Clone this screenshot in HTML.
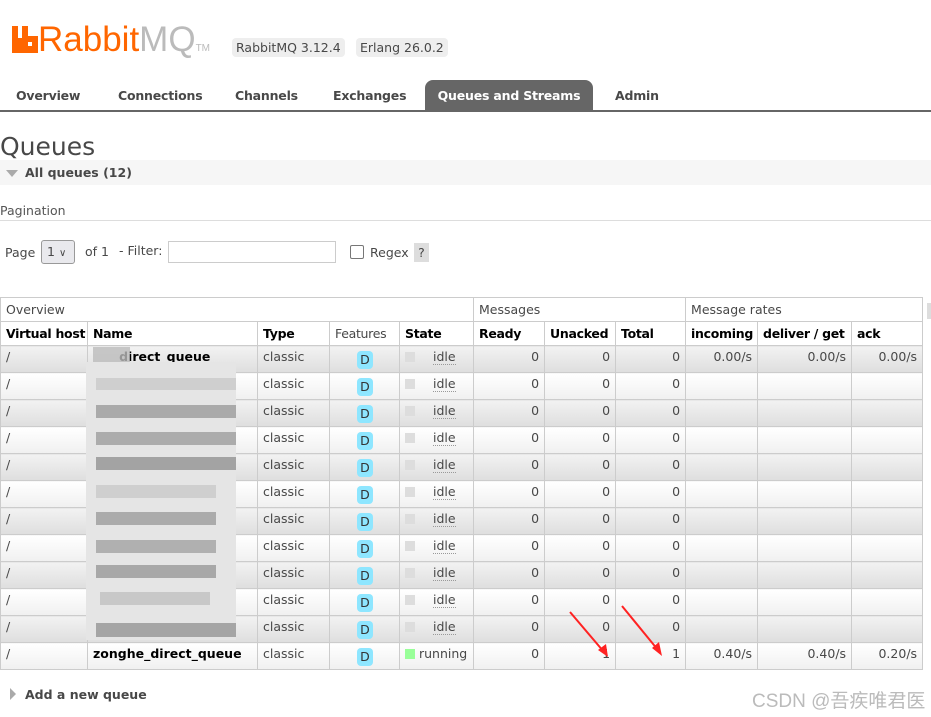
<!DOCTYPE html>
<html><head><meta charset="utf-8"><style>
*{margin:0;padding:0;box-sizing:border-box}
body{width:931px;height:717px;background:#fff;font-family:"DejaVu Sans","Liberation Sans",sans-serif;font-size:12.5px;color:#484848;position:relative;overflow:hidden}
.abs{position:absolute}
.logo{left:12px;top:22px;font-family:"Liberation Sans",sans-serif;font-size:35px;line-height:36px;color:#f60;letter-spacing:0}
.logo .mq{color:#bbb}
.logo .tm{font-size:10px;color:#bbb;letter-spacing:0}
.badge{top:38px;background:#eee;border-radius:4px;padding:2px 4px;font-size:12.5px;color:#484848}
.nav{top:80px;left:0;width:931px;height:32px;border-bottom:2px solid #666}
.nav span{position:absolute;top:8px;font-weight:bold;font-size:12.5px;color:#484848;letter-spacing:-0.2px;white-space:nowrap}
.nav .act{background:#666;color:#fff;top:0;height:31px;padding:8px 0 0;border-radius:8px 8px 0 0;width:168px;text-align:center}
table{position:absolute;left:0;top:297px;border-collapse:collapse;table-layout:fixed;width:923px}
td,th{border:1px solid #ccc;height:27px;padding:0 5px;font-size:12.5px;white-space:nowrap;overflow:hidden}
td{vertical-align:top;padding-top:3px}
th{text-align:left;height:24px;color:#000;letter-spacing:-0.3px}
tr.h1 th{font-weight:normal;color:#484848;letter-spacing:0}
tr.o td{background:linear-gradient(#f2f2f2,#dedede)}
tr.e td{background:linear-gradient(#fff,#f0f0f0)}
td.n{text-align:right}
td.nm{font-weight:bold;color:#000}
.D{display:inline-block;width:16px;height:18px;background:#8ee6ff;border-radius:4px;text-align:center;line-height:18px;color:#333;margin-left:22px;margin-top:2px}
.sq{display:inline-block;width:10px;height:10px;background:#ddd;margin-right:18px;vertical-align:-1px}
.idle{border-bottom:1px dotted #999}
</style></head><body>
<div class="abs logo"><svg width="26" height="27" style="vertical-align:-2px"><path d="M0 0h6v12h4V0h6v10h10v17H0z" fill="#f60"/><rect x="16" y="16" width="4" height="4" fill="#fff"/></svg>Rabbit<span class="mq">MQ</span><span class="tm">TM</span></div>
<div class="abs badge" style="left:232px">RabbitMQ 3.12.4</div>
<div class="abs badge" style="left:356px">Erlang 26.0.2</div>
<div class="abs nav">
<span style="left:16px">Overview</span><span style="left:118px">Connections</span><span style="left:235px">Channels</span><span style="left:333px">Exchanges</span><span class="act" style="left:425px">Queues and Streams</span><span style="left:615px">Admin</span></div>
<div class="abs" style="left:0;top:132px;font-size:25px;color:#484848">Queues</div>
<div class="abs" style="left:0;top:160px;width:931px;height:25px;background:#f6f6f6"></div>
<div class="abs" style="left:6px;top:170px;width:0;height:0;border-left:6px solid transparent;border-right:6px solid transparent;border-top:7px solid #aaa"></div>
<div class="abs" style="left:25px;top:165px;font-weight:bold">All queues (12)</div>
<div class="abs" style="left:0;top:203px;color:#555">Pagination</div>
<div class="abs" style="left:0;top:220px;width:931px;height:1px;background:#ddd"></div>
<div class="abs" style="left:5px;top:245px">Page</div>
<div class="abs" style="left:41px;top:240px;width:34px;height:24px;border:1px solid #999;border-radius:3px;background:#e9e9ed;padding:3px 0 0 5px">1 <span style="font-size:10px">&#8744;</span></div>
<div class="abs" style="left:85px;top:244px">of 1</div>
<div class="abs" style="left:119px;top:243px">- Filter:</div>
<div class="abs" style="left:168px;top:241px;width:168px;height:22px;border:1px solid #ccc"></div>
<div class="abs" style="left:350px;top:245px;width:14px;height:14px;border:1px solid #777;border-radius:2px"></div>
<div class="abs" style="left:370px;top:245px">Regex</div>
<div class="abs" style="left:414px;top:243px;width:15px;height:19px;background:#ddd;text-align:center;padding-top:2px">?</div>
<div class="abs" style="left:927px;top:303px;width:4px;height:16px;background:#ddd"></div>
<table>
<colgroup><col style="width:87px"><col style="width:170px"><col style="width:72px"><col style="width:70px"><col style="width:74px"><col style="width:71px"><col style="width:71px"><col style="width:70px"><col style="width:72px"><col style="width:94px"><col style="width:71px"></colgroup>
<tr class="h1"><th colspan="5">Overview</th><th colspan="3">Messages</th><th colspan="3">Message rates</th></tr>
<tr><th>Virtual host</th><th>Name</th><th>Type</th><th style="font-weight:normal;color:#484848">Features</th><th>State</th><th>Ready</th><th>Unacked</th><th>Total</th><th>incoming</th><th>deliver / get</th><th>ack</th></tr>
<tr class="o"><td>/</td><td class="nm">&nbsp;&nbsp;&nbsp;&nbsp;&nbsp;&nbsp;direct_queue</td><td>classic</td><td><span class="D">D</span></td><td><span class="sq"></span><span class="idle">idle</span></td><td class="n">0</td><td class="n">0</td><td class="n">0</td><td class="n">0.00/s</td><td class="n">0.00/s</td><td class="n">0.00/s</td></tr>
<tr class="e"><td>/</td><td class="nm">di</td><td>classic</td><td><span class="D">D</span></td><td><span class="sq"></span><span class="idle">idle</span></td><td class="n">0</td><td class="n">0</td><td class="n">0</td><td></td><td></td><td></td></tr>
<tr class="o"><td>/</td><td class="nm"></td><td>classic</td><td><span class="D">D</span></td><td><span class="sq"></span><span class="idle">idle</span></td><td class="n">0</td><td class="n">0</td><td class="n">0</td><td></td><td></td><td></td></tr>
<tr class="e"><td>/</td><td class="nm"></td><td>classic</td><td><span class="D">D</span></td><td><span class="sq"></span><span class="idle">idle</span></td><td class="n">0</td><td class="n">0</td><td class="n">0</td><td></td><td></td><td></td></tr>
<tr class="o"><td>/</td><td class="nm"></td><td>classic</td><td><span class="D">D</span></td><td><span class="sq"></span><span class="idle">idle</span></td><td class="n">0</td><td class="n">0</td><td class="n">0</td><td></td><td></td><td></td></tr>
<tr class="e"><td>/</td><td class="nm"></td><td>classic</td><td><span class="D">D</span></td><td><span class="sq"></span><span class="idle">idle</span></td><td class="n">0</td><td class="n">0</td><td class="n">0</td><td></td><td></td><td></td></tr>
<tr class="o"><td>/</td><td class="nm"></td><td>classic</td><td><span class="D">D</span></td><td><span class="sq"></span><span class="idle">idle</span></td><td class="n">0</td><td class="n">0</td><td class="n">0</td><td></td><td></td><td></td></tr>
<tr class="e"><td>/</td><td class="nm"></td><td>classic</td><td><span class="D">D</span></td><td><span class="sq"></span><span class="idle">idle</span></td><td class="n">0</td><td class="n">0</td><td class="n">0</td><td></td><td></td><td></td></tr>
<tr class="o"><td>/</td><td class="nm"></td><td>classic</td><td><span class="D">D</span></td><td><span class="sq"></span><span class="idle">idle</span></td><td class="n">0</td><td class="n">0</td><td class="n">0</td><td></td><td></td><td></td></tr>
<tr class="e"><td>/</td><td class="nm"></td><td>classic</td><td><span class="D">D</span></td><td><span class="sq"></span><span class="idle">idle</span></td><td class="n">0</td><td class="n">0</td><td class="n">0</td><td></td><td></td><td></td></tr>
<tr class="o"><td>/</td><td class="nm"></td><td>classic</td><td><span class="D">D</span></td><td><span class="sq"></span><span class="idle">idle</span></td><td class="n">0</td><td class="n">0</td><td class="n">0</td><td></td><td></td><td></td></tr>
<tr class="e"><td>/</td><td class="nm">zonghe_direct_queue</td><td>classic</td><td><span class="D">D</span></td><td><span class="sq" style="background:#9f9;margin-right:4px"></span>running</td><td class="n">0</td><td class="n">1</td><td class="n">1</td><td class="n">0.40/s</td><td class="n">0.40/s</td><td class="n">0.20/s</td></tr>
</table>
<div class="abs" style="left:93px;top:347px;width:37px;height:16px;background:#bbb;opacity:.8"></div>
<div class="abs" style="left:86px;top:362px;width:150px;height:278px;background:#e5e5e5"></div>
<div class="abs" style="left:96px;top:378px;width:140px;height:12px;background:#cfcfcf"></div>
<div class="abs" style="left:96px;top:405px;width:140px;height:13px;background:#aaa"></div>
<div class="abs" style="left:96px;top:432px;width:140px;height:13px;background:#acacac"></div>
<div class="abs" style="left:96px;top:457px;width:140px;height:13px;background:#a3a3a3"></div>
<div class="abs" style="left:96px;top:485px;width:120px;height:13px;background:#cfcfcf"></div>
<div class="abs" style="left:96px;top:512px;width:120px;height:13px;background:#ababab"></div>
<div class="abs" style="left:96px;top:540px;width:120px;height:13px;background:#b0b0b0"></div>
<div class="abs" style="left:96px;top:565px;width:120px;height:13px;background:#a8a8a8"></div>
<div class="abs" style="left:100px;top:592px;width:110px;height:13px;background:#c8c8c8"></div>
<div class="abs" style="left:96px;top:623px;width:140px;height:14px;background:#a5a5a5"></div>
<svg class="abs" style="left:560px;top:600px" width="120" height="65"><path d="M10 12 L44 52" stroke="#f22" stroke-width="2"/><path d="M38 50 L48 57 L46 44z" fill="#f22"/><path d="M62 6 L98 50" stroke="#f22" stroke-width="2"/><path d="M92 48 L102 56 L99 42z" fill="#f22"/></svg>
<div class="abs" style="left:10px;top:688px;width:0;height:0;border-top:6px solid transparent;border-bottom:6px solid transparent;border-left:6px solid #aaa"></div>
<div class="abs" style="left:25px;top:687px;font-weight:bold">Add a new queue</div>
<div class="abs" style="left:752px;top:686px;font-family:'Liberation Sans','Noto Sans CJK SC',sans-serif;font-size:19px;color:#bbb">CSDN @吾疾唯君医</div>
</body></html>
